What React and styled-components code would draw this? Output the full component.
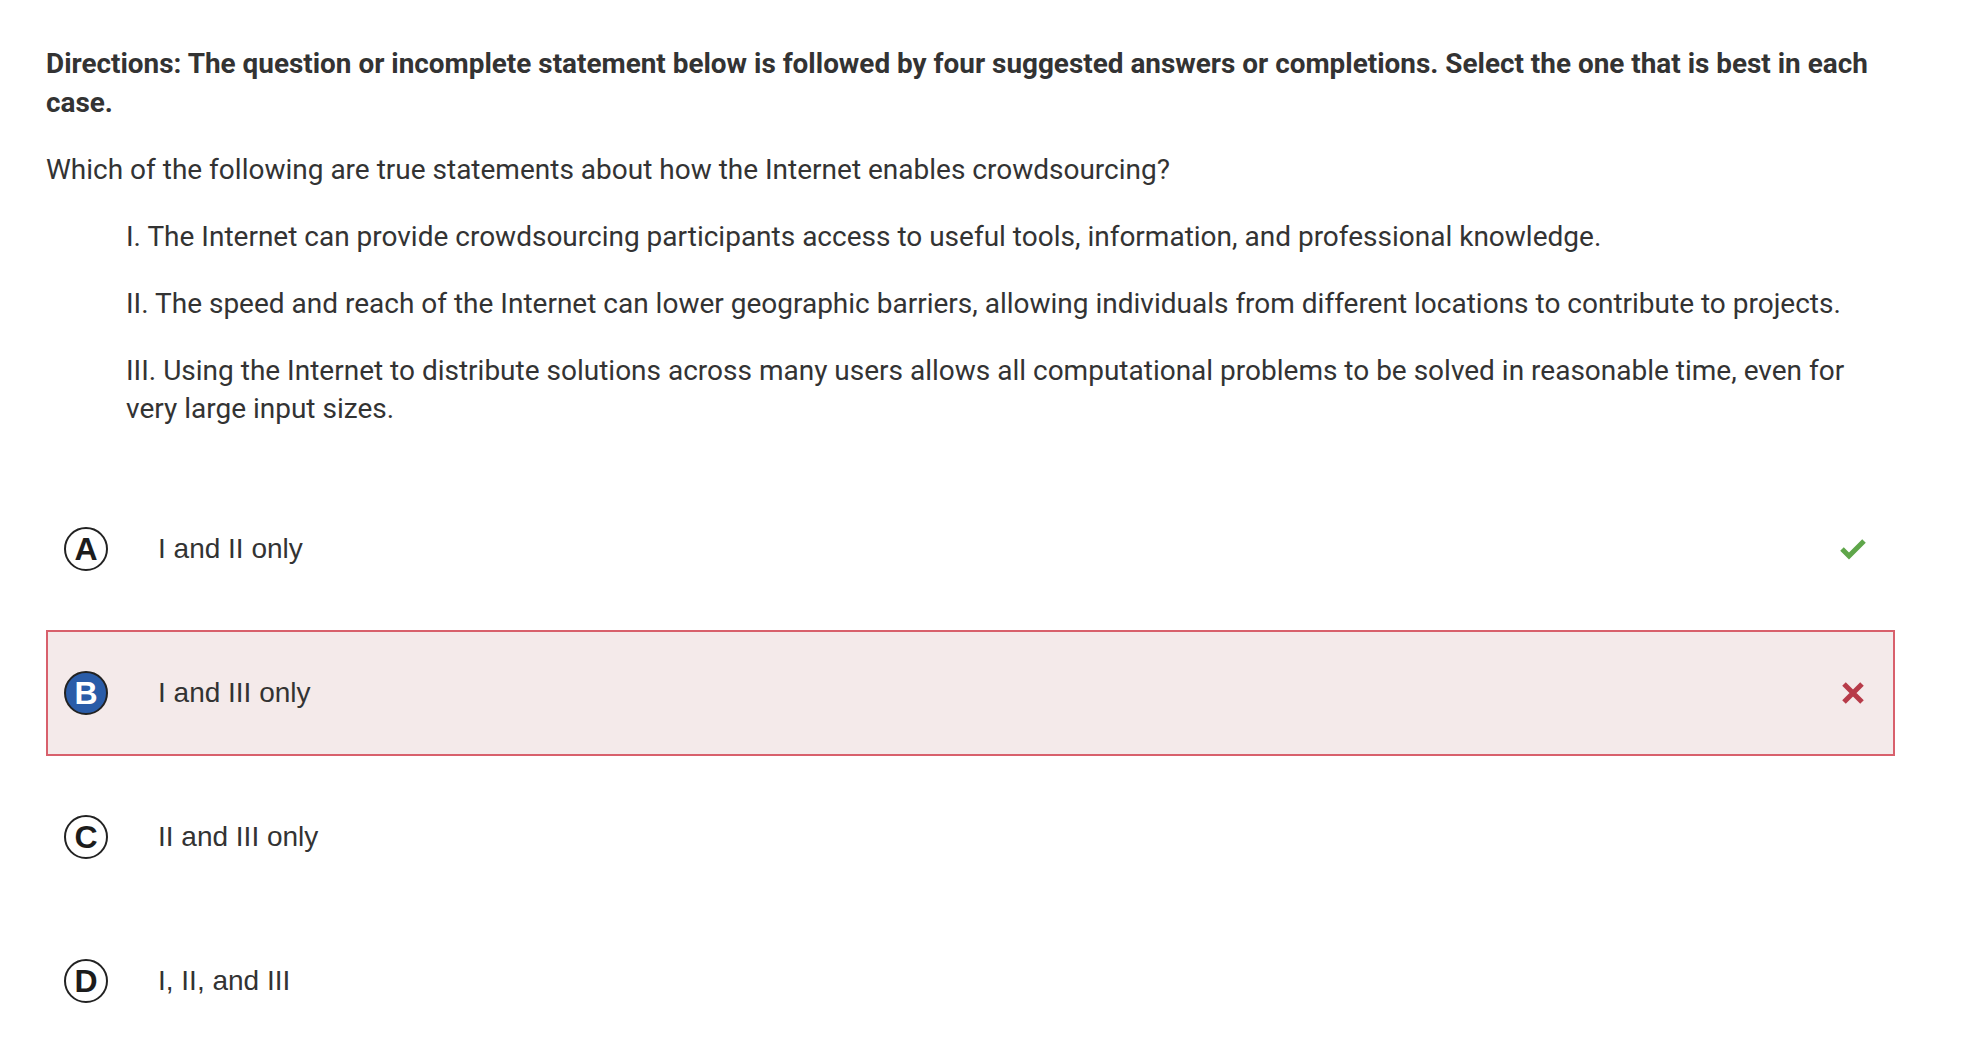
import React from 'react';
import styled, { createGlobalStyle } from 'styled-components';

const GlobalStyle = createGlobalStyle`
  html, body {
    margin: 0;
    padding: 0;
    background: #ffffff;
  }
  body {
    font-family: Roboto, "Liberation Sans", Arial, sans-serif;
    color: #333333;
  }
`;

const Page = styled.div`
  padding: 45px 0 0 46px;
  width: 1849px;
`;

const Directions = styled.p`
  margin: 0 0 29px 0;
  font-size: 27.9px;
  line-height: 38.5px;
  font-weight: 700;
  color: #333333;
`;

const Stem = styled.p`
  margin: 0 0 29px ${(p) => (p.$indent ? '80px' : '0')};
  font-size: 28px;
  line-height: 38px;
  color: #333333;
`;

const Options = styled.div`
  margin-top: 58px;
  display: flex;
  flex-direction: column;
  gap: 18px;
`;

const Row = styled.div`
  height: 126px;
  box-sizing: border-box;
  display: flex;
  align-items: center;
  padding: 0 27px 0 16px;
  border: 2px solid ${(p) => (p.$wrong ? '#d8606c' : 'transparent')};
  background: ${(p) => (p.$wrong ? '#f4eaea' : 'transparent')};
`;

const Bubble = styled.div`
  width: 44px;
  height: 44px;
  box-sizing: border-box;
  border-radius: 50%;
  border: 2px solid #222222;
  background: ${(p) => (p.$selected ? '#2a5ca8' : '#ffffff')};
  color: ${(p) => (p.$selected ? '#ffffff' : '#1c1c1c')};
  display: flex;
  align-items: center;
  justify-content: center;
  font-family: "Liberation Sans", Arial, sans-serif;
  font-weight: 700;
  font-size: 32px;
  line-height: 1;
  flex-shrink: 0;
`;

const Label = styled.div`
  margin-left: 50px;
  flex: 1;
  font-family: "Liberation Sans", Arial, sans-serif;
  font-size: 28px;
  color: #333333;
`;

const Mark = styled.div`
  width: 26px;
  display: flex;
  justify-content: center;
`;

const Check = () => (
  <svg width="26" height="22" viewBox="0 0 26 22">
    <polyline points="2,11 9,18 24,3" fill="none" stroke="#5fa64a" strokeWidth="5" />
  </svg>
);

const Cross = () => (
  <svg width="22" height="22" viewBox="0 0 22 22">
    <path d="M2 2 L20 20 M20 2 L2 20" stroke="#b73b49" strokeWidth="5" />
  </svg>
);

const options = [
  { letter: 'A', text: 'I and II only', mark: 'correct' },
  { letter: 'B', text: 'I and III only', selected: true, mark: 'wrong' },
  { letter: 'C', text: 'II and III only' },
  { letter: 'D', text: 'I, II, and III' },
];

export default function App() {
  return (
    <>
      <GlobalStyle />
      <Page>
        <Directions>
          Directions: The question or incomplete statement below is followed by four suggested answers or
          completions. Select the one that is best in each case.
        </Directions>
        <Stem>Which of the following are true statements about how the Internet enables crowdsourcing?</Stem>
        <Stem $indent>
          I. The Internet can provide crowdsourcing participants access to useful tools, information, and
          professional knowledge.
        </Stem>
        <Stem $indent>
          II. The speed and reach of the Internet can lower geographic barriers, allowing individuals from
          different locations to contribute to projects.
        </Stem>
        <Stem $indent>
          III. Using the Internet to distribute solutions across many users allows all computational problems to
          be solved in reasonable time, even for very large input sizes.
        </Stem>
        <Options>
          {options.map((o) => (
            <Row key={o.letter} $wrong={o.mark === 'wrong'}>
              <Bubble $selected={o.selected}>{o.letter}</Bubble>
              <Label>{o.text}</Label>
              <Mark>
                {o.mark === 'correct' && <Check />}
                {o.mark === 'wrong' && <Cross />}
              </Mark>
            </Row>
          ))}
        </Options>
      </Page>
    </>
  );
}
